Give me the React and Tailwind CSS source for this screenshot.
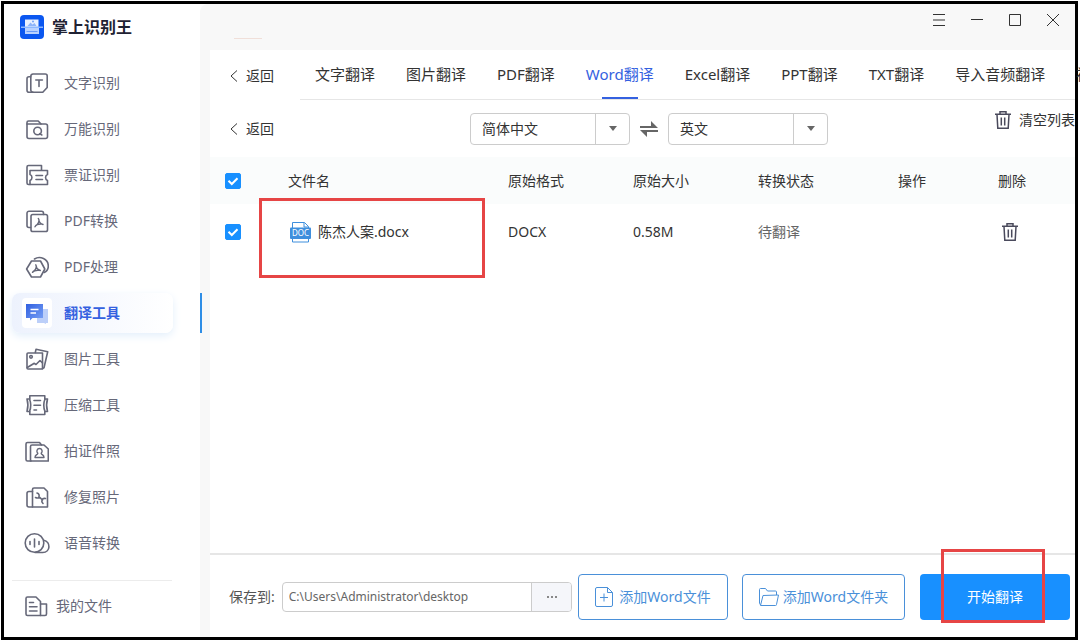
import React, { useState } from "react";

function Icon({ children, className = "size-6" }) {
  return (
    <svg
      viewBox="0 0 24 24"
      className={className}
      fill="none"
      stroke="currentColor"
      strokeWidth="1.6"
      strokeLinecap="round"
      strokeLinejoin="round"
      aria-hidden="true"
    >
      {children}
    </svg>
  );
}

const NAV = [
  {
    label: "文字识别",
    icon: (
      <Icon>
        <path d="M8 3h12.200a2 2 0 0 1 2 2v11.500l-4.400 4.700H8a2.200 2.200 0 0 1-2.200-2.200V5.200A2.200 2.200 0 0 1 8 3z" />
        <path d="M5.800 5.800H4a2 2 0 0 0-2 2v11.400a2 2 0 0 0 2 2h4M10.800 9h6.600M14 9v6.400" />
      </Icon>
    ),
  },
  {
    label: "万能识别",
    icon: (
      <Icon>
        <path d="M2 7V19.500a2 2 0 0 0 2 2h16.500a2 2 0 0 0 2-2V9a2 2 0 0 0-2-2z" />
        <path d="M2 7V5.500A1.500 1.500 0 0 1 3.500 4h9.700L16 7" />
        <circle cx="12.600" cy="14" r="3.800" />
        <path d="M14.800 16.700l2 1.300" />
      </Icon>
    ),
  },
  {
    label: "票证识别",
    icon: (
      <Icon>
        <path d="M5 21.500H3.500A1.500 1.500 0 0 1 2 20V4a1.500 1.500 0 0 1 1.500-1.500h13V7" />
        <path d="M5 7.500h17.500v4c-2.600 1-2.600 5 0 6v4H5v-4c2.600-1 2.600-5 0-6z" />
        <path d="M11 12.500h6.500M11 16.500h6.500" />
      </Icon>
    ),
  },
  {
    label: "PDF转换",
    icon: (
      <Icon>
        <path d="M5.500 18.500H4a2 2 0 0 1-2-2V4.200a2 2 0 0 1 2-2h12.500a2 2 0 0 1 2 2v1.300" />
        <rect x="6" y="5.500" width="16.500" height="17" rx="1.800" />
        <path
          d="M13.300 9.500c1.500 1.500.2 4.200-1 6M13.800 10.500c.2 2.500 1.500 4 4.200 5M10 17.800c1-2 3.500-3 7-2.700"
          strokeWidth="1.400"
        />
      </Icon>
    ),
  },
  {
    label: "PDF处理",
    icon: (
      <Icon>
        <path d="M9.500 4C15 .5 23.300 4 23.300 11c0 3.200-1.700 5.400-4.100 6.500" />
        <path d="M6.500 6h9l4.300 8-4.300 8h-9l-4.900-8z" />
        <path
          d="M10.800 9.800c1.200 2-.3 4.500-1.500 6M11.300 11c0 2 1.500 3.600 4 4.500M7.500 17.300c1.200-1.800 4-2.300 7-2"
          strokeWidth="1.400"
        />
      </Icon>
    ),
  },
  {
    label: "翻译工具",
    icon: (
      <svg viewBox="0 0 24 24" className="size-6" aria-hidden="true">
        <defs>
          <linearGradient id="bubble" x1="0" y1="0" x2="1" y2="1">
            <stop offset="0" stopColor="#2f5fe0" />
            <stop offset="1" stopColor="#7ba2f5" />
          </linearGradient>
        </defs>
        <path d="M12 8h11v14h-2v1l-2-1h-7z" fill="#bccff9" />
        <path d="M1 3h17v14H7.500L5 19.500V17H1z" fill="url(#bubble)" />
        <path d="M5.500 8.500h8M5.500 12H11" stroke="#fff" strokeWidth="1.400" />
      </svg>
    ),
  },
  {
    label: "图片工具",
    icon: (
      <Icon>
        <path d="M3 6h14.500v16H3a1 1 0 0 1-1-1V7a1 1 0 0 1 1-1z" />
        <path d="M10.300 5.500l.7-3.200 11.700 2.500-3.700 16-1.500.7M2.300 20.500l7-4.200 1.700 1.200 4-4 2.500 2.500" />
        <circle cx="6" cy="9.800" r="1.300" />
      </Icon>
    ),
  },
  {
    label: "压缩工具",
    icon: (
      <Icon>
        <path d="M4.800 6V2.800h15V6M4.800 18.500v3h15v-3" />
        <path d="M2 6h2.500c1.600 4 1.600 8.500 0 12.500H2c1.200-4 1.200-8.500 0-12.500zM22.500 6H20c-1.600 4-1.600 8.500 0 12.500h2.500c-1.200-4-1.200-8.500 0-12.500z" />
        <path d="M9 7.500h6.500M9 12.200h6.500M9 17h2.500" />
      </Icon>
    ),
  },
  {
    label: "拍证件照",
    icon: (
      <Icon>
        <path d="M6 22H2.500A1.500 1.500 0 0 1 1 20.500V5a1.500 1.500 0 0 1 1.500-1.500h12L16.500 6" />
        <path d="M7 6h12l4.300 4v12H5.500V7.500A1.500 1.500 0 0 1 7 6z" />
        <path
          d="M12.800 14.300c-1.800-2-.8-4.800 1.700-4.800s3.500 2.800 1.700 4.800c.3 1.500 2.800 1.500 2.800 4.200h-9c0-2.700 2.500-2.700 2.800-4.200z"
          strokeWidth="1.400"
        />
      </Icon>
    ),
  },
  {
    label: "修复照片",
    icon: (
      <Icon>
        <path d="M7.500 6.500H4a2 2 0 0 0-2 2V20a2 2 0 0 0 2 2h3.500" />
        <path d="M9 3h10l3.500 3.500V22h-15V4.500A1.500 1.500 0 0 1 9 3z" />
        <path d="M12 8c2.300.6 2.500 2.500 1.800 4.200M10.500 12.500c1.500.8 3 .6 4.200-.2l2.800 2.700M20.500 13.500c-1.800-.4-3 .3-3.500 1.500-.6 1.300 0 2.500 1 3.500" />
      </Icon>
    ),
  },
  {
    label: "语音转换",
    icon: (
      <svg
        viewBox="0 0 26 24"
        className="h-6 w-[26px]"
        fill="none"
        stroke="currentColor"
        strokeWidth="1.600"
        strokeLinecap="round"
        aria-hidden="true"
      >
        <circle cx="10.500" cy="12" r="9.300" />
        <path d="M19.700 9.300c7.300 1.500 7 12.200-1 12.200H11M6 10.500v3M10.500 8v8M15 10.500v3" />
      </svg>
    ),
  },
];

const TABS = [
  "文字翻译",
  "图片翻译",
  "PDF翻译",
  "Word翻译",
  "Excel翻译",
  "PPT翻译",
  "TXT翻译",
  "导入音频翻译",
  "视频翻译",
];

function Logo() {
  return (
    <svg viewBox="0 0 24 24" className="size-6" aria-hidden="true">
      <rect width="24" height="24" rx="4" fill="#0b57f0" />
      <path d="M5 4.500h13.500V13H5z" fill="#e9f1ff" />
      <path d="M7.500 11l3-3.500 2 2 2-1.500 2 3z" fill="#8fb5fa" />
      <circle cx="13" cy="6.500" r="1" fill="#6ea0f8" />
      <path d="M1 11.500h22v1.500H1z" fill="#8db8ff" />
      <path d="M5 13h14v6H5z" fill="#b9d2ff" />
      <path d="M6.500 16.500h11" stroke="#6a9bf8" />
    </svg>
  );
}

function Trash() {
  return (
    <svg
      viewBox="0 0 18 20"
      className="h-5 w-[18px] shrink-0 text-[#4a4a5c]"
      fill="none"
      stroke="currentColor"
      strokeWidth="1.500"
      aria-hidden="true"
    >
      <path d="M1 4.200h16M6 4V1.800h6V4M3 4.500l.8 13.700h10.400L15 4.500M7.300 7.500v8M10.700 7.500v8" />
    </svg>
  );
}

function BackButton() {
  return (
    <button type="button" className="flex items-center gap-2 text-sm text-[#333]">
      <svg
        viewBox="0 0 8 12"
        className="h-3 w-2"
        fill="none"
        stroke="currentColor"
        aria-hidden="true"
      >
        <path d="M7 .5L1 6l6 5.500" />
      </svg>
      返回
    </button>
  );
}

function LangSelect({ label, options }) {
  return (
    <div className="relative w-40">
      <select
        aria-label={label}
        className="block h-8 w-full appearance-none rounded border border-[#ccc] bg-white pl-[11px] pr-10 text-sm text-[#333]"
      >
        {options.map((option) => (
          <option key={option}>{option}</option>
        ))}
      </select>
      <span className="pointer-events-none absolute inset-y-px right-px flex w-[34px] items-center justify-center border-l border-[#ccc]">
        <svg viewBox="0 0 8 5" className="h-[5px] w-2" fill="#666" aria-hidden="true">
          <path d="M0 0h8L4 5z" />
        </svg>
      </span>
    </div>
  );
}

function CheckBox({ label }) {
  const [checked, setChecked] = useState(true);
  return (
    <label className="relative block size-4">
      <input
        type="checkbox"
        aria-label={label}
        checked={checked}
        onChange={(event) => setChecked(event.target.checked)}
        className="block size-4 appearance-none rounded-[2px] border border-[#1890ff] checked:bg-[#1890ff]"
      />
      <svg
        viewBox="0 0 16 16"
        className="pointer-events-none absolute inset-0 size-4"
        fill="none"
        stroke="#fff"
        strokeWidth="2"
        aria-hidden="true"
      >
        <path d="M3.500 7.800l3.300 3.200 5.700-5.700" />
      </svg>
    </label>
  );
}

function Sidebar() {
  return (
    <aside className="flex w-[196px] shrink-0 flex-col bg-white text-[#666879]">
      <div className="flex h-[46px] items-center gap-2 pl-4">
        <Logo />
        <h1 className="text-base font-bold text-[#1f2233]">掌上识别王</h1>
      </div>
      <nav className="flex flex-1 flex-col pt-[13px]">
        <ul className="flex flex-col gap-1.5">
          {NAV.map((item) => {
            const active = item.label === "翻译工具";
            return (
              <li key={item.label} className="relative pl-2 pr-[27px]">
                <a
                  href="#"
                  aria-current={active ? "page" : undefined}
                  className={
                    active
                      ? "flex h-10 items-center gap-3 rounded-lg bg-linear-to-r from-[#edf2fd] to-white pl-2.5 text-sm font-bold text-[#3461e0] shadow-[0_3px_8px_#e3effb]"
                      : "flex h-10 items-center gap-3 pl-2.5 text-sm"
                  }
                >
                  <span
                    className={
                      active
                        ? "flex size-[30px] items-center justify-center rounded bg-white"
                        : "flex size-[30px] items-center justify-center"
                    }
                  >
                    {item.icon}
                  </span>
                  {item.label}
                </a>
                {active && (
                  <span className="absolute inset-y-0 -right-0.5 z-10 w-0.5 bg-[#2f8ee6]" />
                )}
              </li>
            );
          })}
        </ul>
        <div className="ml-2 mr-7 mt-[17px] border-t border-[#ececec] pt-[5px]">
          <a href="#" className="flex h-10 items-center gap-2 pl-3 text-sm">
            <Icon>
              <path d="M3.500 3h8.500l4.500 4.500V21.500H3.500A1.500 1.500 0 0 1 2 20V4.500A1.500 1.500 0 0 1 3.500 3z" />
              <path d="M16.500 10h6V20a1.500 1.500 0 0 1-1.500 1.500h-4.500M5.500 8.500h4M5.500 12.800h7.500M5.500 17h7.500" />
            </Icon>
            我的文件
          </a>
        </div>
      </nav>
    </aside>
  );
}

function WindowBar() {
  return (
    <header className="flex h-[46px] items-start justify-between pl-[34px] pr-3.5">
      <span className="mt-[34px] h-px w-7 bg-[#f0dfd9]" />
      <div className="mt-2 flex gap-[22px] text-[#333]">
        {[
          ["菜单", "M2 2.500h12M2 8h12M2 13.500h12"],
          ["最小化", "M2 7.500h12"],
          ["最大化", "M2.500 2.500h11v11h-11z"],
          ["关闭", "M2 2l12 12M14 2L2 14"],
        ].map(([label, d]) => (
          <button key={label} type="button" aria-label={label} className="size-4">
            <svg
              viewBox="0 0 16 16"
              className="size-4"
              fill="none"
              stroke="currentColor"
              aria-hidden="true"
            >
              <path d={d} />
            </svg>
          </button>
        ))}
      </div>
    </header>
  );
}

function FileTable() {
  return (
    <table className="w-full table-fixed text-left text-sm text-[#333]">
      <colgroup>
        <col className="w-[78px]" />
        <col className="w-[220px]" />
        <col className="w-[125px]" />
        <col className="w-[125px]" />
        <col className="w-[140px]" />
        <col className="w-[100px]" />
        <col />
      </colgroup>
      <thead>
        <tr className="h-[47px] bg-[#fafcfc]">
          <th className="pl-[15px] font-normal">
            <CheckBox label="全选" />
          </th>
          <th className="font-normal">文件名</th>
          <th className="font-normal">原始格式</th>
          <th className="font-normal">原始大小</th>
          <th className="font-normal">转换状态</th>
          <th className="font-normal">操作</th>
          <th className="font-normal">删除</th>
        </tr>
      </thead>
      <tbody>
        <tr className="h-14">
          <td className="pl-[15px]">
            <CheckBox label="陈杰人案.docx" />
          </td>
          <td className="relative">
            <div className="flex items-center gap-1.5">
              <svg viewBox="0 0 24 24" className="size-6" fill="none" aria-hidden="true">
                <path
                  d="M4.500 8V2.500h12l4 4V8M16 2.500V7h4.500M4.500 18v4h16v-4"
                  stroke="#3f8fdd"
                />
                <rect x="2" y="7.500" width="21" height="11.500" rx="1" fill="#3f8fdd" />
                <text
                  x="12.500"
                  y="16"
                  textAnchor="middle"
                  fontSize="8"
                  fill="#fff"
                >
                  DOC
                </text>
              </svg>
              陈杰人案.docx
            </div>
            <span className="pointer-events-none absolute -left-[29px] -top-1.5 h-20 w-[226px] border-[3px] border-[#e64545]" />
          </td>
          <td>DOCX</td>
          <td>0.58M</td>
          <td className="text-[#666]">待翻译</td>
          <td />
          <td>
            <button type="button" aria-label="删除" className="block pl-[3px]">
              <Trash />
            </button>
          </td>
        </tr>
      </tbody>
    </table>
  );
}

function Footer() {
  return (
    <footer className="flex h-[84px] items-center border-t-2 border-[#e6e6e6] pl-[19px] pr-[5px] pt-0.5">
      <label htmlFor="save-path" className="mr-[7px] shrink-0 text-sm text-[#555]">
        保存到:
      </label>
      <div className="mr-1.5 flex h-[30px] min-w-0 flex-1 overflow-hidden rounded border border-[#ccc]">
        <input
          id="save-path"
          defaultValue="C:\Users\Administrator\desktop"
          className="min-w-0 flex-1 px-1.5 text-xs text-[#666]"
        />
        <button
          type="button"
          aria-label="选择文件夹"
          className="flex w-10 items-center justify-center border-l border-[#ccc] bg-[#f5f6fa] text-[#888]"
        >
          <svg viewBox="0 0 10 2" className="h-0.5 w-2.5" fill="currentColor" aria-hidden="true">
            <path d="M0 0h2v2H0zM4 0h2v2H4zM8 0h2v2H8z" />
          </svg>
        </button>
      </div>
      <button
        type="button"
        className="mr-3.5 flex h-[46px] w-[150px] shrink-0 items-center justify-center gap-1.5 rounded border border-[#4a90d9] text-sm text-[#4a90d9]"
      >
        <svg viewBox="0 0 18 20" className="h-5 w-[18px]" fill="none" stroke="currentColor" aria-hidden="true">
          <path d="M2 .5h10.500l5 5V18a1.500 1.500 0 0 1-1.500 1.500H2A1.500 1.500 0 0 1 .5 18V2A1.500 1.500 0 0 1 2 .5zM12.500.5v5h5M5 10.500h8M9 6.500v8" />
        </svg>
        添加Word文件
      </button>
      <button
        type="button"
        className="mr-[15px] flex h-[46px] w-[163px] shrink-0 items-center justify-center gap-1 rounded border border-[#4a90d9] text-sm text-[#4a90d9]"
      >
        <svg viewBox="0 0 20 18" className="h-[18px] w-5" fill="none" stroke="currentColor" strokeLinejoin="round" aria-hidden="true">
          <path d="M1.500 17L.5 15V1.500a1 1 0 0 1 1-1h5l2 2.500h8a1 1 0 0 1 1 1v3M1.500 17.500L4 7.500l15.500-.5-2 9.500a1 1 0 0 1-1 1z" />
        </svg>
        添加Word文件夹
      </button>
      <div className="relative shrink-0">
        <button
          type="button"
          className="block h-[46px] w-[150px] rounded bg-[#1890ff] text-sm text-white"
        >
          开始翻译
        </button>
        <span className="pointer-events-none absolute -top-[25px] left-[21px] h-[74px] w-[104px] border-[3px] border-[#e64545]" />
      </div>
    </footer>
  );
}

export default function App() {
  return (
    <div className="flex min-h-screen overflow-x-clip bg-white pl-px pr-0.5 pt-px font-['Noto_Sans','Noto_Sans_CJK_SC',sans-serif]">
      <div className="flex min-w-0 flex-1 border-[3px] border-black">
        <Sidebar />
        <main className="flex min-w-0 flex-1 flex-col rounded-tl-lg bg-[#f8f8f8]">
          <WindowBar />
          <div className="ml-2.5 flex flex-1 flex-col bg-white">
            <div className="flex h-[50px]">
              <div className="flex w-[90px] shrink-0 items-center pl-5 pt-0.5">
                <BackButton />
              </div>
              <nav className="flex min-w-0 flex-1 gap-px border-b border-[#e6e6e6]">
                {TABS.map((tab) => (
                  <a
                    key={tab}
                    href="#"
                    className={
                      tab === "Word翻译"
                        ? "relative flex shrink-0 items-center justify-center whitespace-nowrap px-[15px] text-[15px] text-[#3461e0]"
                        : "flex shrink-0 items-center whitespace-nowrap px-[15px] text-[15px] text-[#333]"
                    }
                  >
                    {tab}
                    {tab === "Word翻译" && (
                      <span className="absolute bottom-0 h-0.5 w-9 bg-[#3461e0]" />
                    )}
                  </a>
                ))}
              </nav>
            </div>
            <div className="flex h-[57px] items-center pl-5">
              <div className="w-60">
                <BackButton />
              </div>
              <div className="flex items-center gap-2.5">
                <LangSelect label="源语言" options={["简体中文", "英文"]} />
                <button type="button" aria-label="交换语言">
                  <svg viewBox="0 0 18 16" className="block h-4 w-[18px]" fill="#666" aria-hidden="true">
                    <path d="M0 5h11V0l7 7H0zM18 9H0l7 7v-5h11z" />
                  </svg>
                </button>
                <LangSelect label="目标语言" options={["英文", "简体中文"]} />
              </div>
              <div className="flex flex-1 justify-end pb-[18px]">
                <button
                  type="button"
                  className="flex items-center gap-[7px] whitespace-nowrap text-sm text-[#333]"
                >
                  <Trash />
                  清空列表
                </button>
              </div>
            </div>
            <div className="flex-1">
              <FileTable />
            </div>
            <Footer />
          </div>
        </main>
      </div>
    </div>
  );
}
